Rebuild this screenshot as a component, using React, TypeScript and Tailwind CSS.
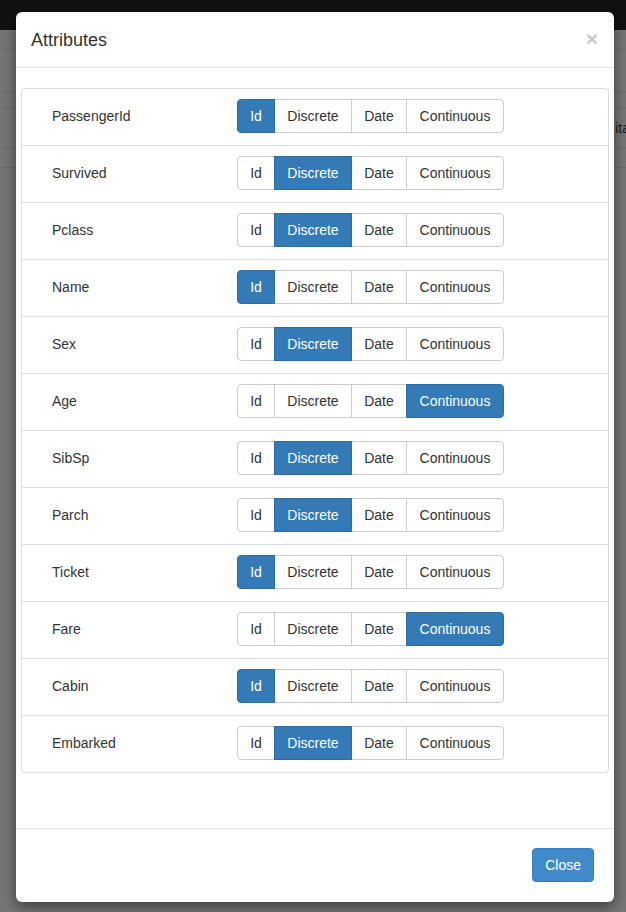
import React from "react";

type Kind = "Id" | "Discrete" | "Date" | "Continuous";

const rows: { name: string; kind: Kind }[] = [
  { name: "PassengerId", kind: "Id" },
  { name: "Survived", kind: "Discrete" },
  { name: "Pclass", kind: "Discrete" },
  { name: "Name", kind: "Id" },
  { name: "Sex", kind: "Discrete" },
  { name: "Age", kind: "Continuous" },
  { name: "SibSp", kind: "Discrete" },
  { name: "Parch", kind: "Discrete" },
  { name: "Ticket", kind: "Id" },
  { name: "Fare", kind: "Continuous" },
  { name: "Cabin", kind: "Id" },
  { name: "Embarked", kind: "Discrete" },
];

const kinds: { k: Kind; w: string }[] = [
  { k: "Id", w: "w-[38px]" },
  { k: "Discrete", w: "w-[78px]" },
  { k: "Date", w: "w-[56px]" },
  { k: "Continuous", w: "w-[98px]" },
];

function Group({ value }: { value: Kind }) {
  return (
    <div className="flex">
      {kinds.map(({ k, w }, i) => {
        const active = k === value;
        const first = i === 0;
        const last = i === kinds.length - 1;
        return (
          <button
            key={k}
            className={[
              "h-[34px] border text-[14px] leading-[20px] text-center",
              w,
              first ? "rounded-l-[4px]" : "-ml-px",
              last ? "rounded-r-[4px]" : "",
              active
                ? "relative z-10 bg-[#337ab7] border-[#2e6da4] text-white"
                : "bg-white border-[#cccccc] text-[#333333]",
            ].join(" ")}
          >
            {k}
          </button>
        );
      })}
    </div>
  );
}

export default function App() {
  return (
    <div
      className="relative w-[626px] h-[912px] overflow-hidden bg-[#777777]"
      style={{ fontFamily: '"Liberation Sans", Arial, Helvetica, sans-serif' }}
    >
      {/* dimmed page underneath */}
      <div className="h-[30px] bg-[#111111]" />
      <div className="flex flex-col">
        <div className="h-[20px] border-b border-[#6c6c6c]" />
        <div className="h-[42px] border-b border-[#6c6c6c]" />
        <div className="h-[17px] border-b border-[#6c6c6c]" />
        <div className="h-[39px] border-b border-[#6c6c6c] flex items-center justify-end">
          <span className="text-[14px] text-[#1a1a1a] mr-[-4px]">ita</span>
        </div>
        <div className="h-[20px] border-b border-[#6c6c6c]" />
      </div>

      {/* modal */}
      <div className="absolute left-[16px] top-[12px] w-[598px] h-[890px] bg-white rounded-[6px] shadow-[0_5px_15px_rgba(0,0,0,0.5)] flex flex-col">
        <div className="h-[56px] border-b border-[#e5e5e5] px-[15px] flex items-center justify-between">
          <h4 className="text-[18px] leading-[26px] text-[#333333] pt-[1px]">Attributes</h4>
          <span className="text-[21px] font-bold leading-none text-[#c8c8c8] -mt-[2px] mr-[1px]">×</span>
        </div>
        <div className="flex-1 pt-[20px] px-[5px]">
          <div className="border border-[#dddddd] rounded-[4px]">
            {rows.map((r, i) => (
              <div
                key={r.name}
                className={[
                  "flex items-center pt-[10px] pb-[12px]",
                  i > 0 ? "border-t border-[#dddddd]" : "",
                ].join(" ")}
              >
                <div className="w-[215px] pl-[30px] text-[14px] text-[#333333]">{r.name}</div>
                <Group value={r.kind} />
              </div>
            ))}
          </div>
        </div>
        <div className="border-t border-[#e5e5e5] pt-[19px] pb-[20px] px-[20px] flex justify-end">
          <button className="h-[34px] px-[12px] rounded-[4px] border border-[#357ebd] bg-[#428bca] text-white text-[14px]">
            Close
          </button>
        </div>
      </div>
    </div>
  );
}
